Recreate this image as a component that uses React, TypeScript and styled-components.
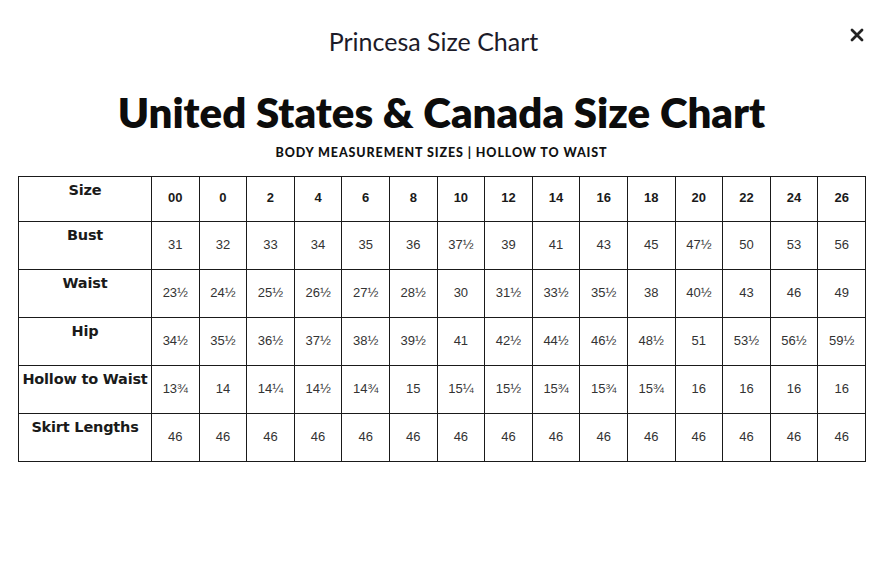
import React from "react";
import styled, { createGlobalStyle } from "styled-components";

const Global = createGlobalStyle`
  html, body { margin: 0; padding: 0; background: #fff; }
  body { width: 887px; height: 562px; overflow: hidden; }
`;

const Page = styled.div`
  width: 887px;
  height: 562px;
  box-sizing: border-box;
  padding: 0 22px 0 18px;
  display: flex;
  flex-direction: column;
  position: relative;
`;

const Header = styled.div`
  height: 82px;
  display: flex;
  align-items: center;
  justify-content: center;
  padding-right: 16px;
`;

const ModalTitle = styled.h2`
  margin: 0;
  font-family: "Lato", sans-serif;
  font-weight: 400;
  font-size: 25px;
  color: #1c1b29;
`;

const Close = styled.button`
  position: absolute;
  top: 25px;
  right: 20px;
  border: 0;
  background: none;
  padding: 0;
  width: 20px;
  height: 20px;
  display: flex;
  align-items: center;
  justify-content: center;
  cursor: pointer;
`;

const Title = styled.h1`
  margin: 8px 0 0;
  text-align: center;
  font-family: "Lato", sans-serif;
  font-weight: 800;
  font-size: 42px;
  line-height: 44px;
  color: #0c0c0c;
`;

const Subtitle = styled.div`
  margin-top: 11px;
  text-align: center;
  font-family: "Lato", sans-serif;
  font-weight: 900;
  font-size: 12.5px;
  letter-spacing: 0.9px;
  color: #111;
  line-height: 16px;
`;

const Table = styled.table`
  margin-top: 15px;
  width: 848px;
  border-collapse: collapse;
  table-layout: fixed;
`;

const LabelCell = styled.th`
  width: 132px;
  border: 1px solid #1a1a1a;
  vertical-align: top;
  padding: 5px 0 0;
  font-family: "DejaVu Sans", sans-serif;
  font-weight: 700;
  font-size: 14.5px;
  letter-spacing: -0.2px;
  color: #1a1a1a;
  white-space: nowrap;
  text-align: center;
`;

const Cell = styled.td<{ $head?: boolean }>`
  border: 1px solid #1a1a1a;
  text-align: center;
  vertical-align: middle;
  padding: 0 0 3px;
  font-family: "Liberation Sans", Arial, sans-serif;
  font-size: 13px;
  font-weight: ${(p) => (p.$head ? 700 : 400)};
  color: ${(p) => (p.$head ? "#1a1a1a" : "#333")};
`;

const Row = styled.tr<{ $h: number }>`
  height: ${(p) => p.$h}px;
`;

const sizes = ["00", "0", "2", "4", "6", "8", "10", "12", "14", "16", "18", "20", "22", "24", "26"];

const rows: [string, string[]][] = [
  ["Bust", ["31", "32", "33", "34", "35", "36", "37½", "39", "41", "43", "45", "47½", "50", "53", "56"]],
  ["Waist", ["23½", "24½", "25½", "26½", "27½", "28½", "30", "31½", "33½", "35½", "38", "40½", "43", "46", "49"]],
  ["Hip", ["34½", "35½", "36½", "37½", "38½", "39½", "41", "42½", "44½", "46½", "48½", "51", "53½", "56½", "59½"]],
  ["Hollow to Waist", ["13¾", "14", "14¼", "14½", "14¾", "15", "15¼", "15½", "15¾", "15¾", "15¾", "16", "16", "16", "16"]],
  ["Skirt Lengths", Array(15).fill("46")],
];

export default function App() {
  return (
    <>
      <Global />
      <Page>
        <Header>
          <ModalTitle>Princesa Size Chart</ModalTitle>
        </Header>
        <Close aria-label="Close">
          <svg width="14" height="14" viewBox="0 0 14 14">
            <path d="M2 2 L12 12 M12 2 L2 12" stroke="#222" strokeWidth="2.8" strokeLinecap="round" />
          </svg>
        </Close>
        <Title>United States &amp; Canada Size Chart</Title>
        <Subtitle>BODY MEASUREMENT SIZES | HOLLOW TO WAIST</Subtitle>
        <Table>
          <tbody>
            <Row $h={45}>
              <LabelCell>Size</LabelCell>
              {sizes.map((s) => (
                <Cell key={s} $head>{s}</Cell>
              ))}
            </Row>
            {rows.map(([label, vals]) => (
              <Row key={label} $h={48}>
                <LabelCell>{label}</LabelCell>
                {vals.map((v, i) => (
                  <Cell key={i}>{v}</Cell>
                ))}
              </Row>
            ))}
          </tbody>
        </Table>
      </Page>
    </>
  );
}
